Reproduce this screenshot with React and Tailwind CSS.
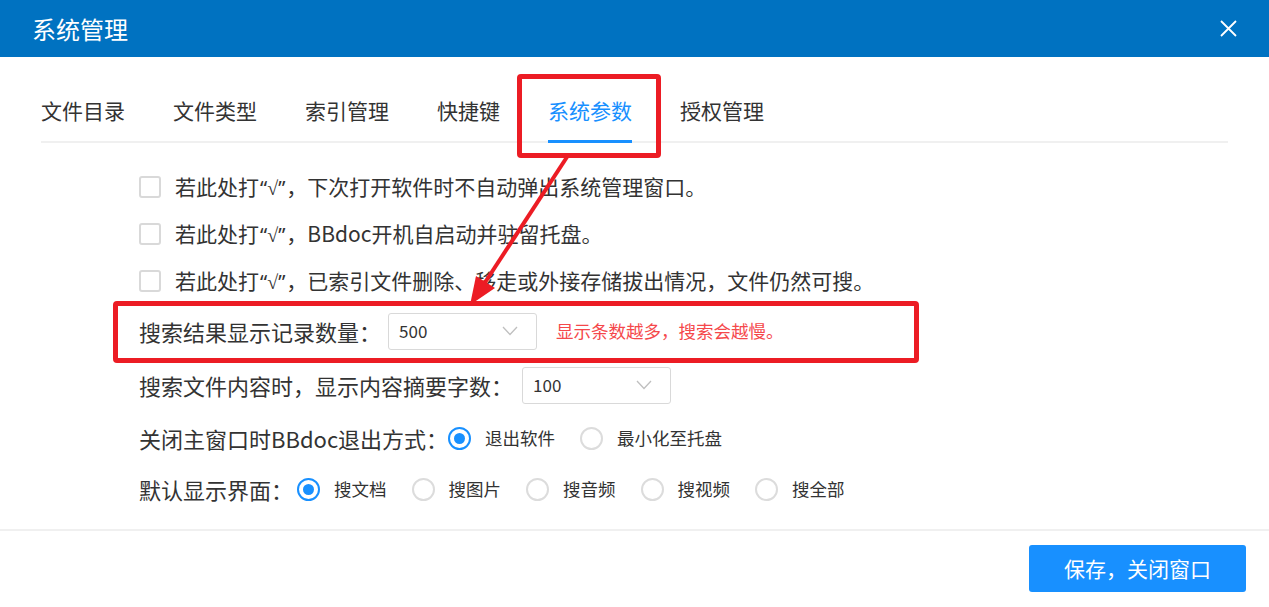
import React, { useState } from "react";

const tabs = ["文件目录", "文件类型", "索引管理", "快捷键", "系统参数", "授权管理"];

const checkItems = [
  "下次打开软件时不自动弹出系统管理窗口。",
  "BBdoc开机自启动并驻留托盘。",
  "已索引文件删除、移走或外接存储拔出情况，文件仍然可搜。",
];

const Chevron = () => (
  <svg width="16" height="10" viewBox="0 0 16 10" fill="none">
    <path d="M1 1 L8 8.5 L15 1" stroke="#bfbfbf" strokeWidth="1.3" />
  </svg>
);

const Select = ({ value }) => (
  <div className="w-[149px] h-[37px] border border-[#d9d9d9] rounded-[3px] flex items-center justify-between pl-[10px] pr-[18px] bg-white">
    <span className="text-[17px] text-[#333]">{value}</span>
    <Chevron />
  </div>
);

const Radio = ({ checked, label, onClick }) => (
  <div className="flex items-center gap-[14px] cursor-pointer" onClick={onClick}>
    <div
      className={
        checked
          ? "w-[23px] h-[23px] rounded-full border-2 border-[#1890ff] flex items-center justify-center"
          : "w-[23px] h-[23px] rounded-full border-2 border-[#dcdcdc]"
      }
    >
      {checked && <div className="w-[11px] h-[11px] rounded-full bg-[#1890ff]" />}
    </div>
    <span className="text-[17.5px] text-[#333]">{label}</span>
  </div>
);

const App = () => {
  const [active] = useState(4);
  const [exitMode, setExitMode] = useState(0);
  const [view, setView] = useState(0);

  return (
    <div
      className="relative w-[1269px] h-[607px] bg-white overflow-hidden"
      style={{ fontFamily: '"Noto Sans CJK SC", "Microsoft YaHei", sans-serif' }}
    >
      {/* title bar */}
      <div className="h-[57px] bg-[#0072c1] flex items-center justify-between pl-[32px] pr-[32px]">
        <span className="text-[24px] text-white leading-none">系统管理</span>
        <svg width="17" height="17" viewBox="0 0 17 17">
          <path d="M1 1 L16 16 M16 1 L1 16" stroke="#fff" strokeWidth="1.8" />
        </svg>
      </div>

      {/* tabs */}
      <div className="mx-[41px] pt-[39px] border-b-2 border-[#f0f0f0] flex gap-[48px]">
        {tabs.map((t, i) => (
          <div
            key={t}
            className={
              i === active
                ? "text-[21px] leading-[28px] pb-[16px] border-b-[3px] border-[#1890ff] -mb-[2px] text-[#1890ff]"
                : "text-[21px] leading-[28px] pb-[16px] border-b-[3px] border-transparent -mb-[2px] text-[#333]"
            }
          >
            {t}
          </div>
        ))}
      </div>

      {/* settings */}
      <div className="pl-[139px] pt-[20px] flex flex-col">
        {checkItems.map((c) => (
          <div key={c} className="h-[47px] flex items-center gap-[14px]">
            <div className="w-[22px] h-[22px] border-2 border-[#d9d9d9] rounded-[3px] bg-white" />
            <span className="text-[21px] text-[#333]">
              若此处打<span className="font-['Noto_Sans'] text-[20px] px-[1px]">“√”</span>，{c}
            </span>
          </div>
        ))}

        <div className="h-[54px] flex items-center">
          <span className="text-[22px] text-[#333] mr-[7px]">搜索结果显示记录数量：</span>
          <Select value="500" />
          <span className="ml-[19px] text-[17.5px] text-[#f5484b]">显示条数越多，搜索会越慢。</span>
        </div>

        <div className="h-[54px] flex items-center">
          <span className="text-[22px] text-[#333] mr-[9px]">搜索文件内容时，显示内容摘要字数：</span>
          <Select value="100" />
        </div>

        <div className="h-[52px] flex items-center">
          <span className="text-[22px] text-[#333]">关闭主窗口时BBdoc退出方式：</span>
          <div className="flex items-center gap-[25px]">
            <Radio checked={exitMode === 0} label="退出软件" onClick={() => setExitMode(0)} />
            <Radio checked={exitMode === 1} label="最小化至托盘" onClick={() => setExitMode(1)} />
          </div>
        </div>

        <div className="h-[50px] flex items-center">
          <span className="text-[22px] text-[#333] mr-[4px]">默认显示界面：</span>
          <div className="flex items-center gap-[25px]">
            {["搜文档", "搜图片", "搜音频", "搜视频", "搜全部"].map((l, i) => (
              <Radio key={l} checked={view === i} label={l} onClick={() => setView(i)} />
            ))}
          </div>
        </div>
      </div>

      {/* footer */}
      <div className="mt-[15px] border-t-2 border-[#f0f0f0] flex justify-end pt-[14px] pr-[23px]">
        <button className="w-[217px] h-[47px] bg-[#1890ff] rounded-[3px] text-white text-[21px]">
          保存，关闭窗口
        </button>
      </div>

      {/* red annotations */}
      <div className="absolute left-[517px] top-[74px] w-[144px] h-[84px] border-[5px] border-[#ec1c24] rounded-[4px] pointer-events-none" />
      <div className="absolute left-[113px] top-[301px] w-[806px] h-[62px] border-[5px] border-[#ec1c24] rounded-[4px] pointer-events-none" />
      <svg className="absolute left-0 top-0 pointer-events-none" width="1269" height="607">
        <line x1="567" y1="157" x2="484" y2="284" stroke="#ec1c24" strokeWidth="4" />
        <polygon points="470,305 495,288 476,276" fill="#ec1c24" />
      </svg>
    </div>
  );
};

export default App;
